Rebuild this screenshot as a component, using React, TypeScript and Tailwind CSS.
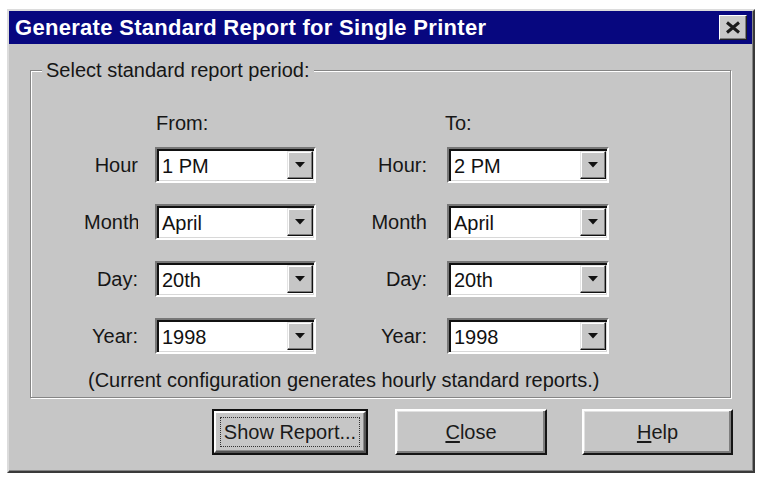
import React from "react";

const rows = [
  { from: "Hour", to: "Hour:", fromValue: "1 PM", toValue: "2 PM", clip: false },
  { from: "Month", to: "Month", fromValue: "April", toValue: "April", clip: true },
  { from: "Day:", to: "Day:", fromValue: "20th", toValue: "20th", clip: false },
  { from: "Year:", to: "Year:", fromValue: "1998", toValue: "1998", clip: false },
];

function Combo({ value }: { value: string }) {
  return (
    <div className="h-[36px] flex bg-white border-2 border-t-[#777] border-l-[#777] border-b-white border-r-white shadow-[inset_2px_2px_0_#111,inset_-1px_-1px_0_#d8d8d8]">
      <div className="flex-1 flex items-center pl-[5px] pt-[1px] text-[20px] text-[#111] leading-none">{value}</div>
      <div className="w-[26px] my-[2px] mr-[1px] bg-[#c6c6c6] flex items-center justify-center border border-t-[#e4e4e4] border-l-[#e4e4e4] border-b-[#111] border-r-[#111] shadow-[inset_-1px_-1px_0_#7c7c7c,inset_1px_1px_0_#fff]">
        <svg width="10" height="6" viewBox="0 0 10 6">
          <path d="M0 0 L10 0 L5 5.5 Z" fill="#111" />
        </svg>
      </div>
    </div>
  );
}

function Button({ children, isDefault, className }: { children: React.ReactNode; isDefault?: boolean; className: string }) {
  if (isDefault) {
    return (
      <button className={`h-[46px] border-2 border-[#111] bg-[#c6c6c6] p-0 ${className}`}>
        <div className="h-full flex items-center justify-center border-2 border-t-white border-l-white border-b-[#555] border-r-[#555] shadow-[inset_-1px_-1px_0_#8a8a8a]">
          <div className="px-[3px] py-[2px] border border-dotted border-[#333] text-[20px] text-[#1a1a1a] leading-[24px]">{children}</div>
        </div>
      </button>
    );
  }
  return (
    <button className={`h-[46px] flex items-center justify-center bg-[#c6c6c6] border-2 border-t-white border-l-white border-b-[#151515] border-r-[#151515] shadow-[inset_-2px_-2px_0_#7e7e7e,inset_1px_1px_0_#e2e2e2] text-[20px] text-[#1a1a1a] ${className}`}>
      {children}
    </button>
  );
}

export default function App() {
  return (
    <div className="w-[757px] h-[482px] bg-white pt-[9px] pl-[7px] font-['Liberation_Sans',Arial,sans-serif] overflow-hidden">
      <div className="w-[748px] h-[464px] bg-[#c6c6c6] border-2 border-t-[#dcdcdc] border-l-[#dcdcdc] border-b-[#3a3a3a] border-r-[#3a3a3a] shadow-[inset_-1px_-1px_0_#858585]">
        {/* title bar */}
        <div className="h-[33px] mr-[1px] bg-[#07077f] flex items-center pl-[6px] pr-[5px]">
          <div className="flex-1 text-white font-bold text-[22px] tracking-[0.3px] leading-none">
            Generate Standard Report for Single Printer
          </div>
          <button className="w-[28px] h-[25px] bg-[#c9c9c9] flex items-center justify-center border border-t-white border-l-white border-b-[#222] border-r-[#222] shadow-[inset_-1px_-1px_0_#7e7e7e]">
            <svg width="16" height="13" viewBox="0 0 16 13">
              <path d="M2 1.5 L14 11.5 M14 1.5 L2 11.5" stroke="#1a1a1a" strokeWidth="3" />
            </svg>
          </button>
        </div>

        {/* group box */}
        <div className="relative mt-[26px] ml-[21px] w-[701px] h-[328px] border border-[#858585] shadow-[1px_1px_0_#fff,inset_1px_1px_0_#fff] pt-[40px] text-[20px] text-[#161616]">
          <span className="absolute -top-[13px] left-[11px] bg-[#c6c6c6] px-[4px] leading-[24px]">Select standard report period:</span>

          <div className="grid grid-cols-[112px_161px_107px_162px] gap-x-[12px] h-[24px] mb-[12px] leading-[24px]">
            <div />
            <div className="pl-[1px]">From:</div>
            <div />
            <div className="-ml-[2px]">To:</div>
          </div>

          <div className="flex flex-col gap-[21px]">
            {rows.map((r) => (
              <div key={r.from} className="grid grid-cols-[112px_161px_107px_162px] gap-x-[12px] h-[36px]">
                <div className="flex items-center justify-end pr-[5px]">
                  {r.clip ? (
                    <span className="w-[54px] overflow-hidden whitespace-nowrap">{r.from}</span>
                  ) : (
                    <span>{r.from}</span>
                  )}
                </div>
                <Combo value={r.fromValue} />
                <div className="flex items-center justify-end pr-[8px]">{r.to}</div>
                <Combo value={r.toValue} />
              </div>
            ))}
          </div>

          <div className="mt-[14px] pl-[57px] leading-[24px]">(Current configuration generates hourly standard reports.)</div>
        </div>

        {/* buttons */}
        <div className="flex mt-[11px]">
          <Button isDefault className="ml-[203px] w-[156px]">Show Report...</Button>
          <Button className="ml-[27px] w-[152px]">
            <span><span className="underline underline-offset-2">C</span>lose</span>
          </Button>
          <Button className="ml-[35px] w-[151px]">
            <span><span className="underline underline-offset-2">H</span>elp</span>
          </Button>
        </div>
      </div>
    </div>
  );
}
